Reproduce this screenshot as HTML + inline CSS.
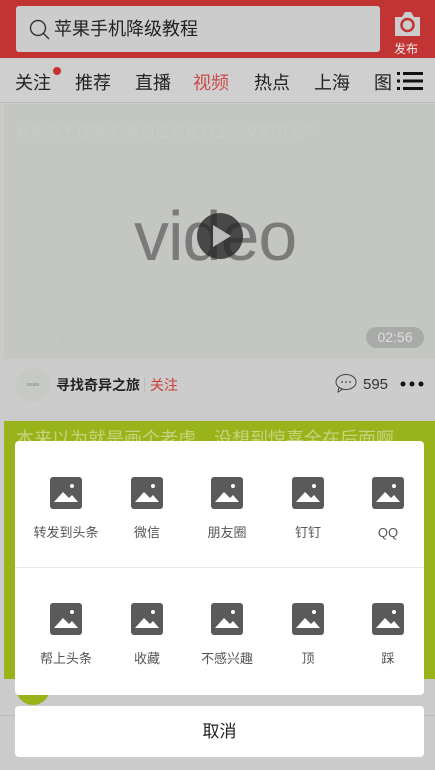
<!DOCTYPE html>
<html><head><meta charset="utf-8"><style>
*{margin:0;padding:0;box-sizing:border-box}
body{width:435px;height:770px;overflow:hidden;background:#cbcbcb;font-family:"Liberation Sans","Noto Sans CJK SC",sans-serif;position:relative}
.abs{position:absolute}
.hdr{left:0;top:0;width:435px;height:58px;background:#c23434}
.search{left:16px;top:6px;width:364px;height:46px;background:#cccccc;border-radius:3px;font-size:18px;color:#222;line-height:46px;padding-left:38px}
.nav{left:0;top:58px;width:435px;height:45px;background:#cfcfcf;border-bottom:1px solid #bdbdbd}
.nav span{position:absolute;top:11px;font-size:18px;color:#222}
.video{left:4px;top:104px;width:431px;height:255px;background:#c3c6c1}
.author{left:4px;top:359px;width:431px;height:52px;background:#cccccc}
.green{left:4px;top:421px;width:431px;height:258px;background:#99b31a}
.modal{left:15px;top:441px;width:409px;height:254px;background:#fff;border-radius:4px}
.item{position:absolute;width:80px;text-align:center;font-size:13px;line-height:16px;color:#555}
.ic{width:32px;height:32px;background:#5a5a5a;border-radius:3px;margin:0 auto 16px;position:relative;overflow:hidden}
.cancel{left:15px;top:706px;width:409px;height:51px;background:#fff;border-radius:4px;text-align:center;line-height:51px;font-size:17px;color:#222}
</style></head><body>
<div class="abs hdr"></div>
<div class="abs search">苹果手机降级教程</div>
<svg class="abs" style="left:29px;top:19px" width="22" height="22" viewBox="0 0 22 22"><circle cx="9" cy="9" r="7.5" fill="none" stroke="#333" stroke-width="1.4"/><line x1="14.5" y1="14.5" x2="20" y2="20" stroke="#333" stroke-width="1.4"/></svg>
<svg class="abs" style="left:393px;top:11px" width="29" height="26" viewBox="0 0 29 26"><path d="M2 6h7l3-5h6l3 5h6v19H2z" fill="#ccc"/><circle cx="14.5" cy="14" r="6" fill="none" stroke="#c23434" stroke-width="2.5"/></svg>
<div class="abs" style="left:394px;top:40px;font-size:12px;color:#eee">发布</div>
<div class="abs nav">
<span style="left:15px">关注</span><span style="left:53px;top:9px;width:8px;height:8px;border-radius:50%;background:#c83030"></span>
<span style="left:75px">推荐</span><span style="left:135px">直播</span><span style="left:193px;color:#c94c4c">视频</span><span style="left:254px">热点</span><span style="left:314px">上海</span><span style="left:374px">图</span>
<svg style="position:absolute;left:397px;top:13px" width="26" height="20" viewBox="0 0 26 20"><rect x="0" y="1" width="3" height="3" fill="#111"/><rect x="0" y="8.5" width="3" height="3" fill="#111"/><rect x="0" y="16" width="3" height="3" fill="#111"/><rect x="6" y="1" width="20" height="3" fill="#111"/><rect x="6" y="8.5" width="20" height="3" fill="#111"/><rect x="6" y="16" width="20" height="3" fill="#111"/></svg>
</div>
<div class="abs video">
<div class="abs" style="left:12px;top:16px;font-size:15px;color:#c8cbc6">我是憋不住笑了,难道这就是对生子女的好处?</div>
<div class="abs" style="left:130px;top:92px;font-size:70px;color:#7a7a7a;letter-spacing:-1px">video</div>
<div class="abs" style="left:193px;top:109px;width:46px;height:46px;border-radius:50%;background:rgba(40,40,40,.8)"></div>
<svg class="abs" style="left:209px;top:121px" width="18" height="22"><path d="M0 0L18 11L0 22z" fill="#bbb"/></svg>
<div class="abs" style="left:12px;top:226px;font-size:12px;color:#c0c3be">2.1万次播放</div>
<div class="abs" style="left:362px;top:223px;width:58px;height:21px;border-radius:11px;background:#a8aba7;color:#ddd;font-size:14px;text-align:center;line-height:21px">02:56</div>
</div>
<div class="abs author">
<div class="abs" style="left:12px;top:9px;width:34px;height:34px;border-radius:50%;background:#c6c9c4;font-size:5px;color:#888;text-align:center;line-height:34px">avata</div>
<div class="abs" style="left:52px;top:16px;font-size:14px;font-weight:bold;color:#222">寻找奇异之旅</div>
<div class="abs" style="left:140px;top:19px;width:1px;height:14px;background:#bbb"></div>
<div class="abs" style="left:146px;top:16px;font-size:14px;color:#d03a3a">关注</div>
<svg class="abs" style="left:331px;top:14px" width="22" height="20" viewBox="0 0 22 20"><ellipse cx="11" cy="9" rx="10" ry="7.5" fill="none" stroke="#444" stroke-width="1"/><path d="M4 14l-1 5 5-3" fill="none" stroke="#444" stroke-width="1"/><circle cx="7" cy="9" r=".9" fill="#444"/><circle cx="11" cy="9" r=".9" fill="#444"/><circle cx="15" cy="9" r=".9" fill="#444"/></svg>
<div class="abs" style="left:359px;top:17px;font-size:15px;color:#333">595</div>
<svg class="abs" style="left:395px;top:21px" width="26" height="8"><circle cx="4" cy="4" r="2.5" fill="#111"/><circle cx="13" cy="4" r="2.5" fill="#111"/><circle cx="22" cy="4" r="2.5" fill="#111"/></svg>
</div>
<div class="abs green"><div class="abs" style="left:12px;top:4px;font-size:18px;color:#c7d37e;white-space:nowrap">本来以为就是画个老虎，没想到惊喜全在后面啊</div></div>
<div class="abs" style="left:4px;top:679px;width:431px;height:36px;background:#cbcbcb"></div>
<div class="abs" style="left:16px;top:680px;width:34px;height:25px;border-radius:0 0 17px 17px;background:#99b31a"></div>
<div class="abs" style="left:0;top:715px;width:435px;height:55px;background:#cbcbcb;border-top:1px solid #bbb"></div>
<div class="abs modal">
<div class="abs" style="left:0;top:126px;width:409px;height:1px;background:#e6e6e6"></div>
</div>
<div class="abs cancel">取消</div>
<script>
var t=["转发到头条","微信","朋友圈","钉钉","QQ"],b=["帮上头条","收藏","不感兴趣","顶","踩"],xs=[26,107,187,268,348];
var h="";
function it(x,y,s){return '<div class="item" style="left:'+x+'px;top:'+y+'px"><div class="ic"><svg width="32" height="32"><circle cx="22" cy="9" r="2" fill="#fff"/><path d="M4 25L13 15L19 21L22 18L28 25z" fill="#fff"/></svg></div>'+s+'</div>';}
for(var i=0;i<5;i++){h+=it(xs[i],477,t[i]);h+=it(xs[i],603,b[i]);}
document.body.insertAdjacentHTML("beforeend",h);
</script>
</body></html>
